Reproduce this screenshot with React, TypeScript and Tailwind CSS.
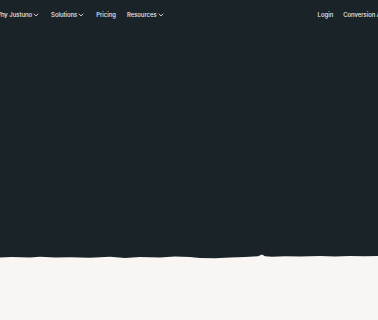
import { ChevronDown } from "lucide-react";

const links = [
  { label: "Why Justuno", menu: true },
  { label: "Solutions", menu: true },
  { label: "Pricing", menu: false },
  { label: "Resources", menu: true },
];

export default function App() {
  return (
    <div className="w-[378px] h-[320px] overflow-hidden bg-[#f8f5f2] font-['Inter',sans-serif]">
      <div className="relative h-[260px] bg-[#1a2428]">
        <nav className="flex items-center h-[31px] -ml-[5px] text-[5.9px] font-medium text-[#eef0f0] whitespace-nowrap">
          <ul className="flex items-center gap-[11px]">
            {links.map((l) => (
              <li key={l.label} className="flex items-center gap-0">
                <span>{l.label}</span>
                {l.menu && <ChevronDown size={8} strokeWidth={2.4} />}
              </li>
            ))}
          </ul>
          <ul className="flex items-center gap-[10px] ml-[153px]">
            <li>Login</li>
            <li>Conversion Audit</li>
          </ul>
        </nav>
        <svg
          className="absolute left-0 bottom-0"
          width="378"
          height="8"
          viewBox="0 0 378 8"
          preserveAspectRatio="none"
        >
          <path
            fill="#f8f5f2"
            d="M0 5.5 L12 5 L30 5.6 L40 4.8 L55 5.6 L70 5.2 L90 5.8 L110 4.8 L125 5.9 L140 5.1 L160 5.5 L175 4.6 L190 5.1 L200 6 L215 6.3 L230 5.6 L245 4.9 L258 4.3 L262 2.5 L265 4.3 L272 4.7 L285 4.3 L300 4.5 L320 4.1 L335 4.6 L350 4 L365 4.3 L378 3.9 L378 8 L0 8 Z"
          />
        </svg>
      </div>
    </div>
  );
}
